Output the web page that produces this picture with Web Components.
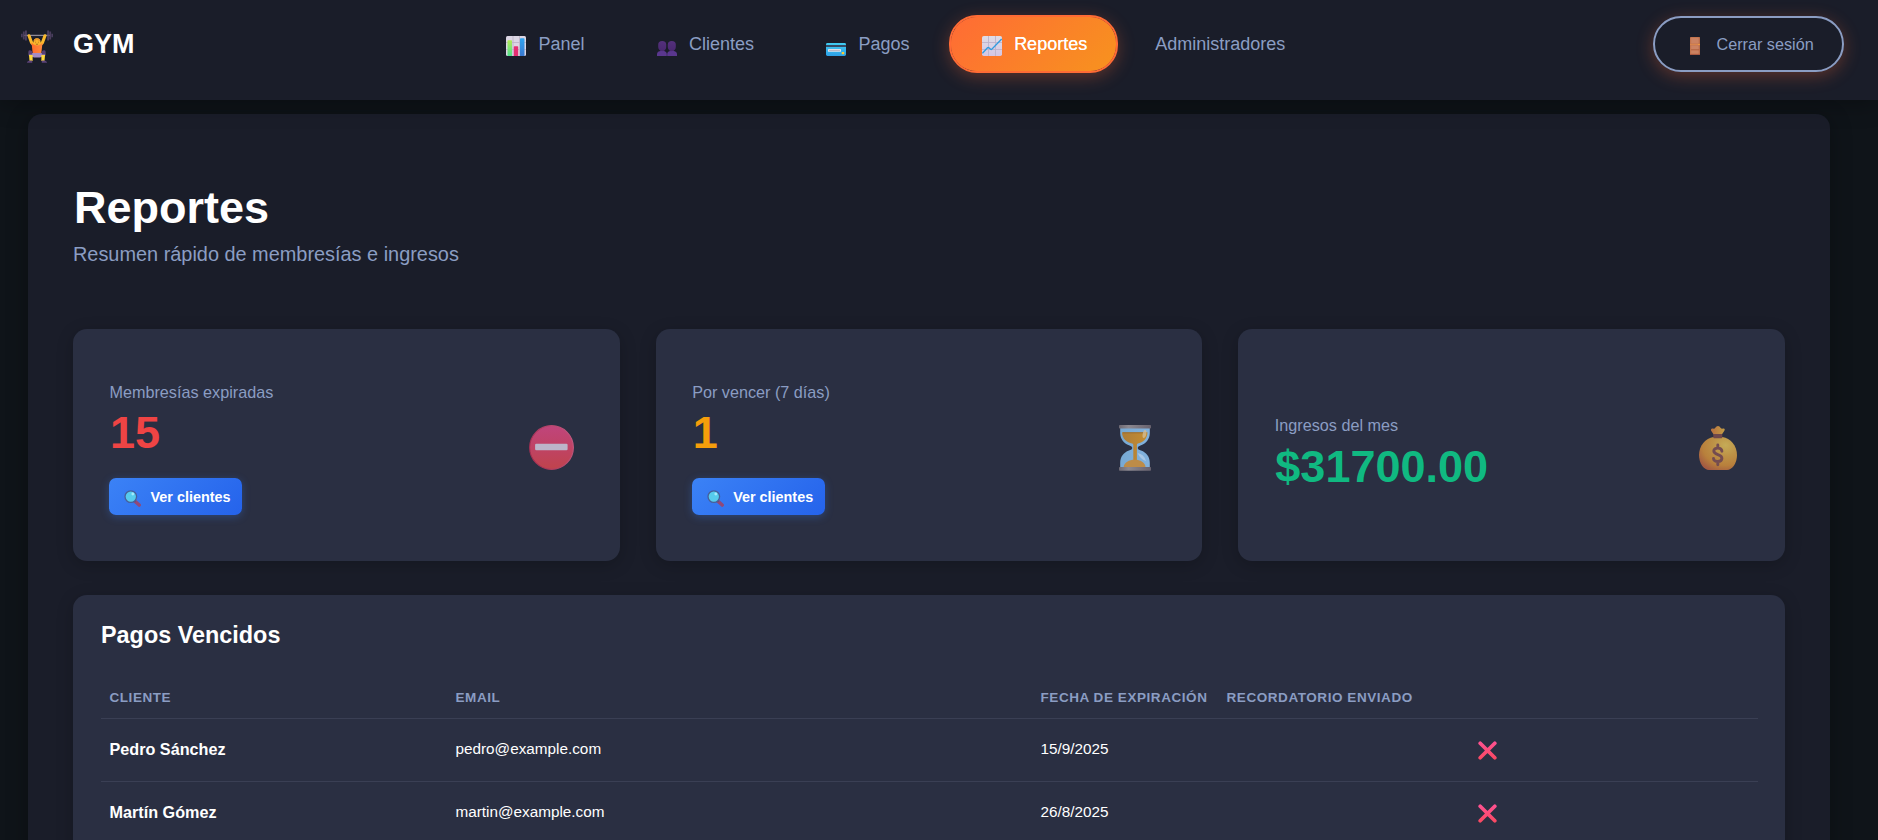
<!DOCTYPE html>
<html lang="es">
<head>
<meta charset="utf-8">
<title>GYM - Reportes</title>
<style>
  html, body { margin: 0; height: 840px; overflow: hidden; }
  body {
    background: #0f1419;
    color: #fff;
    font-family: "Liberation Sans", Arial, sans-serif;
    --muted: #8b9dc3;
    --surface: #1a1d29;
    --card: #2a2f42;
    --line: #3a3f54;
  }
</style>
</head>
<body>
<gym-app></gym-app>

<script>
const ICONS = {
  lifter: { w: 32, h: 33, svg: `
    <defs><linearGradient id="a" x1="0" x2="1"><stop stop-color="#ff6a2b"/><stop offset="1" stop-color="#ff8a3c"/></linearGradient></defs>
    <g transform="scale(.97 1)">
    <path d="M3 5.400H30" stroke="#8f8a96" stroke-width="1.300"/>
    <path d="M.9 3.800V7.200M32.100 3.800V7.200" stroke="#55456a" stroke-width="1.400"/>
    <path d="M2.900 1.600V9.400M30.100 1.600V9.400" stroke="#4a3d5c" stroke-width="1.900"/>
    <path d="M5.100 .4V10.600M27.900 .4V10.600" stroke="#56466a" stroke-width="1.600"/>
    <path d="M8.300 5.800L10.800 12.500L14 15.500M24.700 5.800L22.200 12.500L19 15.500" fill="none" stroke="#fbb92b" stroke-width="3.200" stroke-linecap="round" stroke-linejoin="round"/>
    <path d="M10.800 12.600L13 14.500H20L22.200 12.600L20.900 23.500H12.100Z" fill="url(#a)"/>
    <circle cx="16.500" cy="11.800" r="3.600" fill="#fbb52a"/>
    <path d="M13 11.500C13.200 7.200 19.800 7.200 20 11.500C18.500 10.800 17 10 16 9.400C15.500 10.500 14.200 11.200 13 11.500Z" fill="#e9952a"/>
    <path d="M15 11.800V12.500M18 11.800V12.500M15.300 14Q16.500 14.800 17.700 14" stroke="#8a4a23" stroke-width=".7" fill="none"/>
    <path d="M11.800 23H21.200L25 21.200V25.500L19.500 27.500H13.500L8 25.500V21.200Z" fill="#a58cc4"/>
    <path d="M8 20.600Q10 19.800 11.600 21.500V24.500H8ZM25 20.600Q23 19.800 21.400 21.500V24.500H25Z" fill="#594173"/>
    <path d="M8.200 25H12V31H8.800ZM24.800 25H21V31H24.200Z" fill="#ffd83b"/>
    <path d="M6 32.800Q6.500 30.800 9 30.600H11.600V32.800ZM27 32.800Q26.500 30.800 24 30.600H21.400V32.800Z" fill="#5b4278"/>
    </g>` },

  bars: { w: 20, h: 20, svg: `
    <defs>
      <linearGradient id="g" x2="0" y2="1"><stop stop-color="#b2ea55"/><stop offset="1" stop-color="#4fe08d"/></linearGradient>
      <linearGradient id="b" x2="0" y2="1"><stop stop-color="#2fa4f0"/><stop offset="1" stop-color="#3a78cf"/></linearGradient>
    </defs>
    <rect width="20" height="20" rx="1.500" fill="#dcd6e4"/>
    <path d="M7 0V20M13.500 0V20M0 6.500H20M0 13.500H20" stroke="#beb6c8" stroke-width=".9"/>
    <path d="M1.500 20V5Q1.500 4.300 2.200 4.300H5.300Q6 4.300 6 5V20Z" fill="url(#g)"/>
    <path d="M7.800 20V11Q7.800 10.200 8.500 10.200H11.500Q12.200 10.200 12.200 11V20Z" fill="#e62f72"/>
    <path d="M14 20V3Q14 2.200 14.700 2.200H17.800Q18.500 2.200 18.500 3V20Z" fill="url(#b)"/>` },

  users: { w: 20, h: 15, svg: `
    <defs><linearGradient id="u" x2="0" y2="1"><stop stop-color="#54307c"/><stop offset="1" stop-color="#49286f"/></linearGradient></defs>
    <path d="M3.200 8H7.300V11H3.200ZM12.700 8H16.800V11H12.700Z" fill="#432365"/>
    <path d="M0 15V13Q.3 10.200 4 10H6.500Q9.600 10.300 9.800 13V15ZM10.200 15V13Q10.400 10.200 14 10H16.500Q19.700 10.300 20 13V15Z" fill="#5a378e"/>
    <path d="M1.200 3.500Q1.200 0 5.200 0Q9.200 0 9.200 3.500V6Q9.200 9.600 5.200 10.300Q1.200 9.600 1.200 6ZM10.800 3.500Q10.800 0 14.800 0Q18.800 0 18.800 3.500V6Q18.800 9.600 14.800 10.300Q10.800 9.600 10.800 6Z" fill="url(#u)"/>` },

  card: { w: 20, h: 13, svg: `
    <defs><linearGradient id="c" x2="0" y2="1"><stop stop-color="#41cdf2"/><stop offset="1" stop-color="#2c9fe6"/></linearGradient></defs>
    <rect width="20" height="13" rx="1.400" fill="url(#c)"/>
    <rect y="2" width="20" height="2" fill="#344a63"/>
    <rect x="2" y="6" width="13" height="2.800" rx=".4" fill="#e2e2ea"/>
    <rect x="3" y="6.900" width="11" height="1" fill="#b8b4c0"/>
    <rect x="15.700" y="9" width="2.500" height="2.300" rx=".4" fill="#fccc33"/>` },

  trend: { w: 20, h: 20, svg: `
    <defs><linearGradient id="t" x2="0" y2="1"><stop stop-color="#dfdce6"/><stop offset="1" stop-color="#d4c6e4"/></linearGradient></defs>
    <rect width="20" height="20" rx="1.800" fill="url(#t)"/>
    <path d="M6.500 0V20M13.500 0V20M0 6.500H20M0 13.500H20" stroke="#bcb2cb" stroke-width=".9"/>
    <path d="M.4 17.300L5.500 11.800Q6.200 11.200 6.900 11.800L8.600 13.300Q9.300 13.800 9.900 13.100L19.700 3" fill="none" stroke="#2f9be0" stroke-width="1.400"/>` },

  door: { w: 10, h: 18, svg: `
    <rect width="10" height="18" rx=".4" fill="#c4754f"/>
    <path d="M1.200 1H9V6.500H1.200ZM1.200 8.500H9V12H1.200ZM1.200 13.500H9V16.500H1.200Z" fill="#cb8262"/>
    <path d="M0 7.400H10" stroke="#e08a4c" stroke-width=".8"/>
    <path d="M1 12.700H9.200M9.200 .8V17" stroke="#ad6043" stroke-width=".6"/>
    <path d="M0 17.600H10" stroke="#a4553f" stroke-width=".9"/>
    <circle cx="9" cy="7.500" r=".7" fill="#ffab3d"/>` },

  search: { w: 17, h: 17, svg: `
    <path d="M11 11.200L15.200 15.100" stroke="#914878" stroke-width="3.400" stroke-linecap="round"/>
    <path d="M10 10.200L11.500 11.700" stroke="#57557c" stroke-width="1.600"/>
    <circle cx="6.800" cy="6.600" r="5.800" fill="#56cbed" stroke="#475f99" stroke-width="1.300"/>
    <circle cx="8.800" cy="4" r="1.400" fill="#a3eafb"/>` },

  noentry: { w: 45, h: 45, svg: `
    <defs>
      <linearGradient id="n" x2="0" y2="1"><stop stop-color="#c0457c"/><stop offset=".5" stop-color="#bf4365"/><stop offset="1" stop-color="#c0434c"/></linearGradient>
      <linearGradient id="e" x1="0" x2="1" y1=".5" y2=".2"><stop stop-color="#a12e51"/><stop offset="1" stop-color="#c25a80"/></linearGradient>
    </defs>
    <circle cx="22.500" cy="22.500" r="21.900" fill="url(#n)" stroke="url(#e)" stroke-width="1.100"/>
    <rect x="6.100" y="18.700" width="32.500" height="6.600" rx="1.200" fill="#bcb5ca"/>` },

  hourglass: { w: 32, h: 46, svg: `
    <defs>
      <linearGradient id="h" x1="0" x2="1"><stop stop-color="#77a9d4"/><stop offset="1" stop-color="#83b2dd"/></linearGradient>
      <linearGradient id="s" x1="0" x2="1"><stop stop-color="#ae7d38"/><stop offset="1" stop-color="#c48d31"/></linearGradient>
      <linearGradient id="m" x1="0" x2="1"><stop stop-color="#6d6973"/><stop offset=".3" stop-color="#8b8890"/><stop offset="1" stop-color="#67616e"/></linearGradient>
    </defs>
    <path d="M1.200 3H30.800V8C30.800 14 27 18.500 22 20.200Q18.600 21.300 18.600 23Q18.600 24.500 22 25.600C27.500 27.500 30.800 32 30.800 38V43H1.200V38C1.200 32 4.500 27.500 10 25.600Q13.400 24.500 13.400 23Q13.400 21.300 10 20.200C5 18.500 1.200 14 1.200 8Z" fill="url(#h)"/>
    <path d="M3 7.300H28.500C28.500 13.500 24 18 18.800 18.500Q17.900 18.700 17.900 20V35.500H14.300V20Q14.300 18.700 13.200 18.500C8 18 3 13.500 3 7.300Z" fill="url(#s)"/>
    <path d="M4 7.800H27.500" stroke="#95682e" stroke-width=".8"/>
    <path d="M4.700 42C5 37.500 10 34.800 15.800 34.800C21.500 34.800 26 37.500 26.500 42Z" fill="#bd8c48"/>
    <ellipse cx="25.500" cy="9" rx="1.800" ry="4" transform="rotate(12 25.500 9)" fill="#d3bd93" opacity=".8"/>
    <path d="M18.500 28Q25 29 27 36Q21.500 34.500 18.500 28Z" fill="#b0cbe6" opacity=".85"/>
    <rect width="32" height="3.500" rx=".8" fill="url(#m)"/>
    <rect y="42" width="32" height="3.800" rx=".8" fill="url(#m)"/>` },

  money: { w: 38, h: 44, svg: `
    <defs>
      <radialGradient id="r" cx=".7" cy=".25" r=".85"><stop stop-color="#c5ab57"/><stop offset=".4" stop-color="#bd9146"/><stop offset=".72" stop-color="#b8803c"/><stop offset="1" stop-color="#a35a42"/></radialGradient>
      <linearGradient id="p" x1="0" x2="1"><stop stop-color="#b8703f"/><stop offset="1" stop-color="#c39d45"/></linearGradient>
    </defs>
    <path d="M15 9L12 4.500Q11.500 2 14 2.500Q15.500 3 16.300 1.800Q17.300 0 19 0Q20.700 0 21.500 1.800Q22.500 3 24 2.500Q26.500 2 25.500 4.500L22.500 9Z" fill="url(#p)"/>
    <path d="M14.500 11H23.500C31.500 12 38 20 38 29C38 37.500 33 44 28 44H10C5 44 0 37.500 0 29C0 20 6.500 12 14.500 11Z" fill="url(#r)"/>
    <rect x="14.300" y="8" width="9" height="4.200" rx=".8" fill="#70484b"/>
    <path d="M22.900 25.300C22.900 21.200 14.800 21 14.800 25.100C14.800 29.500 22.900 27.800 22.900 32.300C22.900 36.700 14.500 36.500 14.500 32.500M18.800 19V22M18.800 35.500V38.800" fill="none" stroke="#744c50" stroke-width="2.900" stroke-linecap="round"/>` },

  cross: { w: 19, h: 19, svg: `
    <defs><linearGradient id="y" gradientUnits="userSpaceOnUse" x1="0" y1="0" x2="0" y2="19"><stop stop-color="#ff5294"/><stop offset="1" stop-color="#f9485f"/></linearGradient></defs>
    <path d="M2.200 2.200L16.800 16.800M16.800 2.200L2.200 16.800" stroke="url(#y)" stroke-width="3.700" stroke-linecap="round"/>` }
};

class Base extends HTMLElement {
  constructor() { super(); this.attachShadow({ mode: 'open' }); }
  connectedCallback() { this.shadowRoot.innerHTML = this.view(); }
}

customElements.define('gym-icon', class extends Base {
  view() {
    const i = ICONS[this.getAttribute('name')];
    return `<style>:host{display:block;flex:none;width:${i.w}px;height:${i.h}px}svg{display:block}</style>
      <svg width="${i.w}" height="${i.h}" viewBox="0 0 ${i.w} ${i.h}">${i.svg}</svg>`;
  }
});

customElements.define('gym-nav-item', class extends Base {
  view() {
    return `<style>
      :host{display:flex;align-items:center;box-sizing:border-box;height:58px;padding:0 29px;border:2px solid transparent;
        border-radius:28px;font-size:18px;line-height:22px;color:var(--muted);white-space:nowrap}
      :host([active]){color:#fff;border-color:#ff6b35;background:linear-gradient(135deg,#ff6b35,#f7931e) padding-box;
        background-color:#ff6b35;box-shadow:0 4px 17px rgba(255,107,53,.3);text-shadow:0 0 .6px #fff}
      .icon{display:flex;align-items:flex-end;height:20px;margin:4px 12.500px 0 2px}
    </style>
    ${this.hasAttribute('icon') ? `<span class="icon"><gym-icon name="${this.getAttribute('icon')}"></gym-icon></span>` : ''}
    <span><slot></slot></span>`;
  }
});

customElements.define('gym-header', class extends Base {
  view() {
    return `<style>
      :host{display:grid;grid-template-columns:473px 1fr auto;box-sizing:border-box;height:100px;padding:0 34px 0 0;
        background:var(--surface);box-shadow:0 4px 22px rgba(0,0,0,.3)}
      .brand{display:flex;padding:30px 0 0 20.500px;gap:20.500px;font-size:27px;font-weight:700;line-height:28px}
      nav{display:flex;gap:8px;padding-top:15px}
      .plain{margin-left:-2px}
      .out{display:flex;align-items:center;box-sizing:border-box;width:191px;height:56px;margin-top:16px;padding-left:35px;gap:16.500px;
        border:2px solid var(--muted);border-radius:28px;font-size:16.200px;line-height:20px;color:var(--muted);
        box-shadow:0 4px 17px rgba(255,107,53,.3)}
      .out gym-icon{margin-top:4px}
    </style>
    <div class="brand"><gym-icon name="lifter"></gym-icon><span>GYM</span></div>
    <nav>
      <gym-nav-item icon="bars">Panel</gym-nav-item>
      <gym-nav-item icon="users">Clientes</gym-nav-item>
      <gym-nav-item icon="card">Pagos</gym-nav-item>
      <gym-nav-item icon="trend" active>Reportes</gym-nav-item>
      <gym-nav-item class="plain">Administradores</gym-nav-item>
    </nav>
    <div class="out"><gym-icon name="door"></gym-icon><span>Cerrar sesión</span></div>`;
  }
});

customElements.define('gym-button', class extends Base {
  view() {
    return `<style>
      :host{display:flex;align-items:center;box-sizing:border-box;width:133px;height:37px;padding-left:15px;gap:9.500px;border-radius:7px;
        background:linear-gradient(135deg,#3b82f6,#2563eb);box-shadow:0 2px 9px rgba(59,130,246,.3);
        font-size:14.400px;font-weight:700;line-height:18px;color:#fff;white-space:nowrap}
      gym-icon{margin-top:3px}
    </style><gym-icon name="search"></gym-icon><span><slot></slot></span>`;
  }
});

customElements.define('gym-stat', class extends Base {
  view() {
    return `<style>
      :host{display:flex;align-items:center;justify-content:space-between;box-sizing:border-box;height:232px;
        padding:5px var(--end,46px) 0 36px;border-radius:14px;background:var(--card);box-shadow:0 4px 17px rgba(0,0,0,.2)}
      .label{padding-left:.5px;font-size:16.200px;line-height:24px;color:var(--muted)}
      .value{margin-top:3px;padding-left:1px;font-size:45px;font-weight:700;line-height:51px;color:var(--tone)}
      ::slotted(gym-button){margin-top:20px}
      :host([plain]) .text{padding-top:10px}
      :host([plain]) .value{margin-top:4px}
    </style>
    <div class="text"><div class="label">${this.getAttribute('label')}</div>
    <div class="value">${this.getAttribute('value')}</div><slot></slot></div>
    <gym-icon name="${this.getAttribute('icon')}"></gym-icon>`;
  }
});

customElements.define('gym-payment-row', class extends Base {
  view() {
    return `<style>
      :host{display:grid;grid-template-columns:346px 585px 186px 1fr;align-items:center;box-sizing:border-box;height:63px;
        padding-bottom:2px;border-bottom:1px solid var(--line);font-size:15.300px;line-height:20px}
      span{padding-left:8.500px}
      .name{font-size:16.200px;font-weight:700}
      gym-icon{justify-self:center;margin:3px 1px 0 0}
    </style>
    <span class="name">${this.getAttribute('name')}</span><span>${this.getAttribute('email')}</span>
    <span>${this.getAttribute('date')}</span><gym-icon name="cross"></gym-icon>`;
  }
});

customElements.define('gym-payments', class extends Base {
  view() {
    return `<style>
      :host{display:block;box-sizing:border-box;min-height:300px;padding:26px 27px 0 28px;border-radius:14px;background:var(--card);
        box-shadow:0 4px 17px rgba(0,0,0,.2)}
      h2{margin:0 0 27px;font-size:23.400px;line-height:28px}
      .head{display:grid;grid-template-columns:346px 585px 186px 1fr;align-items:center;box-sizing:border-box;height:43px;
        padding-top:1px;border-bottom:1px solid var(--line);font-size:13.500px;font-weight:700;line-height:18px;letter-spacing:.5625px;color:var(--muted)}
      .head span{padding-left:8.500px;white-space:nowrap}
    </style>
    <h2>Pagos Vencidos</h2>
    <div class="head"><span>CLIENTE</span><span>EMAIL</span><span>FECHA DE EXPIRACIÓN</span><span>RECORDATORIO ENVIADO</span></div>
    <slot></slot>`;
  }
});

customElements.define('gym-app', class extends Base {
  view() {
    return `<style>
      :host{display:block;height:840px;overflow:hidden;contain:strict}
      gym-header{position:relative}
      main{box-sizing:border-box;width:1802px;margin:14px 0 0 28px;padding:66px 45px 0;border-radius:14px;
        background:var(--surface);box-shadow:0 4px 22px rgba(0,0,0,.3)}
      h1{margin:0 0 0 1px;font-size:45px;line-height:55px}
      p{margin:4px 0 60px;font-size:19.900px;line-height:30px;color:var(--muted)}
      .stats{display:grid;grid-template-columns:repeat(3,1fr);gap:36px;margin-bottom:34px}
    </style>
    <gym-header></gym-header>
    <main>
      <h1>Reportes</h1>
      <p>Resumen rápido de membresías e ingresos</p>
      <div class="stats">
        <gym-stat label="Membresías expiradas" value="15" icon="noentry" style="--tone:#ef4444;--end:46px"><gym-button>Ver clientes</gym-button></gym-stat>
        <gym-stat label="Por vencer (7 días)" value="1" icon="hourglass" style="--tone:#f59e0b;--end:51px"><gym-button>Ver clientes</gym-button></gym-stat>
        <gym-stat plain label="Ingresos del mes" value="$31700.00" icon="money" style="--tone:#10b981;--end:48px"></gym-stat>
      </div>
      <gym-payments>
        <gym-payment-row name="Pedro Sánchez" email="pedro@example.com" date="15/9/2025"></gym-payment-row>
        <gym-payment-row name="Martín Gómez" email="martin@example.com" date="26/8/2025"></gym-payment-row>
      </gym-payments>
    </main>`;
  }
});
</script>
</body>
</html>
